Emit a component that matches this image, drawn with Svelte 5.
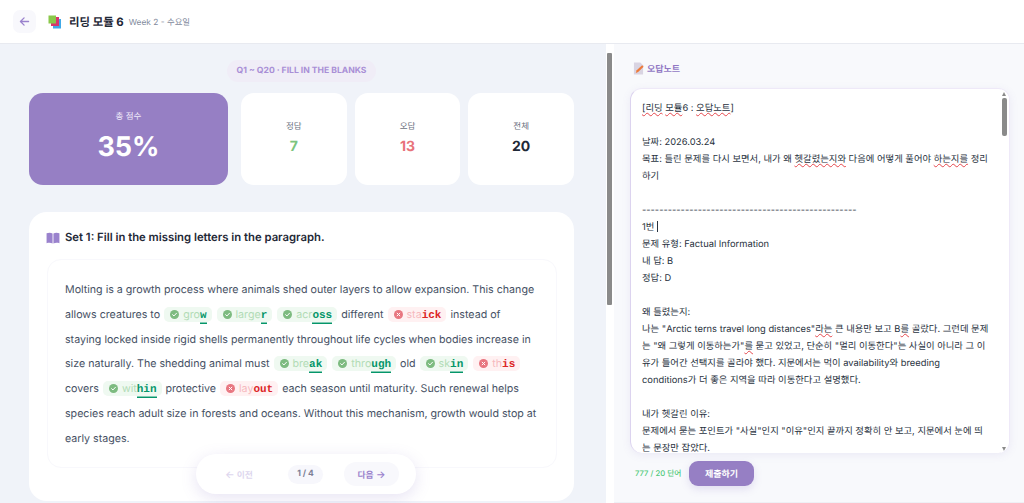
<script>
  const stats = [
    { label: '정답', value: '7', tone: 'good' },
    { label: '오답', value: '13', tone: 'bad' },
    { label: '전체', value: '20', tone: 'all' }
  ];

  // *word* marks what the browser's spell check underlined
  const note = [
    '*[리딩* *모듈*6 : *오답노트*]',
    '',
    '날짜: 2026.03.24',
    '목표: 틀린 문제를 다시 보면서, 내가 왜 *헷갈렸는지와* 다음에 어떻게 풀어야 *하는지를* 정리하기',
    '',
    '--------------------------------------------------',
    '1번|',
    '문제 유형: Factual Information',
    '내 답: B',
    '정답: D',
    '',
    '왜 틀렸는지:',
    '나는 "Arctic terns travel long distances"*라는* 큰 내용만 보고 B*를* 골랐다. 그런데 문제는 "왜 그렇게 이동하는가"*를* 묻고 있었고, 단순히 "멀리 이동한다"는 사실이 아니라 그 이유가 들어간 선택지를 골라야 했다. 지문에서는 먹이 availability와 breeding',
    'conditions가 더 좋은 지역을 따라 이동한다고 설명했다.',
    '',
    '내가 헷갈린 이유:',
    '문제에서 묻는 포인트가 "사실"인지 "이유"인지 끝까지 정확히 안 보고, 지문에서 눈에 띄는 문장만 잡았다.'
  ];
</script>

{#snippet chip(ok, typed, fixed)}
  <span class="chip" class:ok class:no={!ok}>
    <svg class="mark" viewBox="0 0 10 10" aria-hidden="true">
      <circle cx="5" cy="5" r="5" />
      {#if ok}
        <path d="M2.9 5.2 4.4 6.6 7.2 3.6" />
      {:else}
        <path d="M3.5 3.5 6.5 6.5M6.5 3.5 3.5 6.5" />
      {/if}
    </svg>
    <span class="typed">{typed}</span><b class="fixed">{fixed}</b>
  </span>
{/snippet}

<div class="app">
  <header class="top">
    <button class="back" aria-label="뒤로">
      <svg viewBox="0 0 16 16" width="13" height="13"><path d="M13 8H3M7.5 3.5 3 8l4.5 4.5" /></svg>
    </button>
    <svg class="books" viewBox="0 0 14 14" width="14" height="14" aria-hidden="true">
      <rect x="5" y="4" width="8" height="9.5" fill="#3fa9e8" />
      <rect x="3" y="2" width="8" height="9" fill="#d8356c" />
      <rect x="0.5" y="0.5" width="7.5" height="8" fill="#8ac84a" />
    </svg>
    <h1>리딩 모듈 6</h1>
    <span class="sub">Week 2 - 수요일</span>
  </header>

  <main class="split">
    <section class="left">
      <div class="pill-row"><span class="pill">Q1 ~ Q20 · FILL IN THE BLANKS</span></div>

      <div class="scores">
        <div class="total">
          <span class="total-label">총 점수</span>
          <strong>35%</strong>
        </div>
        {#each stats as s}
          <div class="stat">
            <span class="stat-label">{s.label}</span>
            <strong class={s.tone}>{s.value}</strong>
          </div>
        {/each}
      </div>

      <article class="card">
        <h2>
          <svg viewBox="0 0 16 14" width="14" height="12" aria-hidden="true">
            <path d="M0.5 1.5C3 0.5 5.6 0.6 7.5 1.8V13.4C5.6 12.3 3 12.2 0.5 13Z" />
            <path d="M15.5 1.5C13 0.5 10.4 0.6 8.5 1.8V13.4C10.4 12.3 13 12.2 15.5 13Z" />
          </svg>
          Set 1: Fill in the missing letters in the paragraph.
        </h2>
        <div class="passage">
          Molting is a growth process where animals shed outer layers to allow expansion. This change allows creatures to
          {@render chip(true, 'gro', 'w')}
          {@render chip(true, 'large', 'r')}
          {@render chip(true, 'acr', 'oss')}
          different
          {@render chip(false, 'sta', 'ick')}
          instead of staying locked inside rigid shells permanently throughout life cycles when bodies increase in size naturally. The shedding animal must
          {@render chip(true, 'bre', 'ak')}
          {@render chip(true, 'thro', 'ugh')}
          old
          {@render chip(true, 'sk', 'in')}
          {@render chip(false, 'th', 'is')}
          covers
          {@render chip(true, 'wit', 'hin')}
          protective
          {@render chip(false, 'lay', 'out')}
          each season until maturity. Such renewal helps species reach adult size in forests and oceans. Without this mechanism, growth would stop at early stages.
        </div>
      </article>

      <nav class="pager">
        <button class="prev"><span class="arrow">←</span> 이전</button>
        <span class="count">1 / 4</span>
        <button class="next">다음 <span class="arrow">→</span></button>
      </nav>
    </section>

    <div class="page-scroll"><i></i></div>

    <aside class="right">
      <h3>
        <svg viewBox="0 0 12 14" width="11" height="13" aria-hidden="true">
          <path d="M1 0.5H8L11 3.5V13.5H1Z" fill="#d9d4e2" />
          <path d="M3 12 4 9 10 3.5 11.6 5 5.6 10.8Z" fill="#ee7a3a" />
        </svg>
        오답노트
      </h3>
      <div class="note">
        <div class="note-text">
          {#each note as line}
            <div class="line">
              {#each line.replace('|', '').split('*') as part, i}
                {#if i % 2}<u>{part}</u>{:else}{part}{/if}
              {/each}
              {#if line.endsWith('|')}<span class="caret"></span>{/if}
            </div>
          {/each}
        </div>
        <div class="note-scroll"><em class="up"></em><i></i><em class="down"></em></div>
      </div>
      <div class="foot">
        <span class="words">777 / 20 단어</span>
        <button class="submit">제출하기</button>
      </div>
    </aside>
  </main>
</div>

<style>
  :global(body) { margin: 0; }
  .app {
    height: 503px;
    overflow: hidden;
    display: flex;
    flex-direction: column;
    font-family: Inter, "Noto Sans CJK KR", sans-serif;
    color: #1f2937;
    text-rendering: geometricPrecision;
  }
  button { font-family: inherit; border: 0; text-rendering: geometricPrecision; }

  .top {
    height: 44px;
    flex: none;
    box-sizing: border-box;
    border-bottom: 1px solid #e8eaf0;
    background: #fff;
    display: flex;
    align-items: center;
    padding-left: 13px;
  }
  .back {
    width: 23px;
    height: 23px;
    padding: 0;
    border-radius: 7px;
    background: #f8f8fc;
    display: flex;
    align-items: center;
    justify-content: center;
  }
  .back path { fill: none; stroke: #9a82cd; stroke-width: 1.6; stroke-linecap: round; stroke-linejoin: round; }
  .books { margin-left: 12px; }
  h1 { margin: 0 0 0 7px; font-size: 11.4px; font-weight: 700; color: #1f2937; }
  .sub { margin-left: 5px; font-size: 8.4px; color: #7f8a9c; }

  .split { flex: 1; display: flex; min-height: 0; }

  .left {
    width: 606px;
    flex: none;
    position: relative;
    box-sizing: border-box;
    background: #f0f3f9;
    padding: 16px 32px 0 29px;
    overflow: hidden;
  }
  .pill-row { display: flex; justify-content: center; }
  .pill {
    height: 22px;
    line-height: 22px;
    padding: 0 10px;
    border-radius: 11px;
    background: #f0edf7;
    color: #a98fd6;
    font-size: 8.6px;
    font-weight: 700;
  }
  .scores {
    display: flex;
    gap: 8px;
    margin-top: 11px;
    height: 92px;
  }
  .total {
    margin-right: 5px;
    width: 199px;
    flex: none;
    border-radius: 14px;
    background: #967fc4;
    color: #fff;
    display: flex;
    flex-direction: column;
    align-items: center;
    padding-top: 18px;
    box-sizing: border-box;
  }
  .total-label { font-size: 8.5px; color: #f0ebfa; line-height: 12px; }
  .total strong { font-size: 27px; font-weight: 700; line-height: 33px; margin-top: 7px; }
  .stat {
    flex: 1;
    background: #fff;
    border-radius: 13px;
    display: flex;
    flex-direction: column;
    align-items: center;
    padding-top: 28px;
    box-sizing: border-box;
  }
  .stat-label { font-size: 8.5px; color: #6b7280; line-height: 12px; }
  .stat strong { font-size: 14px; font-weight: 700; line-height: 18px; margin-top: 5px; }
  .good { color: #7cc47f; }
  .bad { color: #e8727a; }
  .all { color: #1f2937; }

  .card {
    margin-top: 27px;
    width: 545px;
    height: 289px;
    box-sizing: border-box;
    background: #fff;
    border-radius: 18px;
    padding: 17px 17px 0 17px;
  }
  h2 {
    margin: 0;
    font-size: 11.3px;
    font-weight: 600;
    line-height: 17px;
    color: #1f2937;
    display: flex;
    align-items: center;
    gap: 5px;
  }
  h2 svg { fill: #9a82cd; }
  .passage {
    margin: 13px 0 0 1px;
    height: 209px;
    box-sizing: border-box;
    border: 1px solid #f8f8fc;
    border-radius: 14px;
    padding: 18px 17px 0;
    font-size: 10.67px;
    line-height: 24.75px;
    color: #465164;
  }
  .chip {
    display: inline-flex;
    align-items: baseline;
    height: 15px;
    line-height: 15px;
    padding: 0 5px 0 6px;
    margin: 0 1px;
    border-radius: 5px;
  }
  .chip.ok { background: #eff9f1; }
  .chip.no { background: #fff1f2; }
  .mark { width: 9px; height: 9px; margin-right: 4px; flex: none; align-self: center; }
  .mark path { fill: none; stroke: #fff; stroke-width: 1.1; stroke-linecap: round; stroke-linejoin: round; }
  .ok .mark circle { fill: #7dbb80; }
  .no .mark circle { fill: #e87680; }
  .ok .typed { color: #b2dcb6; }
  .no .typed { color: #f6b9be; }
  .fixed {
    font-family: "Liberation Mono", monospace;
    font-size: 11px;
    font-weight: 700;
  }
  .ok .fixed { color: #059669; box-shadow: inset 0 -1.5px #059669; }
  .no .fixed { color: #dc2626; }

  .pager {
    position: absolute;
    left: 196px;
    top: 410px;
    width: 220px;
    height: 40px;
    box-sizing: border-box;
    background: #fff;
    border-radius: 20px;
    box-shadow: 0 4px 16px rgba(120, 100, 190, 0.18);
    display: flex;
    align-items: center;
    padding-left: 29px;
  }
  .pager button { font-size: 8.8px; font-weight: 600; height: 24px; background: transparent; padding: 0; }
  .arrow { font-size: 10px; }
  .pager .prev { color: #ddd6ee; width: 63px; text-align: left; }
  .count {
    width: 35px;
    text-align: center;
    font-size: 8.5px;
    font-weight: 700;
    color: #7d7f96;
    background: #f7f7fc;
    border-radius: 10px;
    height: 19px;
    line-height: 19px;
  }
  .pager .next { color: #9a82cd; background: #f8f8fc; border-radius: 12px; width: 55px; margin-left: 21px; }

  .page-scroll {
    width: 8px;
    flex: none;
    background: #fff;
    position: relative;
  }
  .page-scroll i {
    position: absolute;
    left: 1px;
    top: 9px;
    width: 5px;
    height: 252px;
    background: #8a8a8a;
    border-radius: 1px;
  }

  .right {
    flex: 1;
    min-width: 0;
    box-sizing: border-box;
    background: #f8f9fc;
    padding: 16px 14px 0 16px;
    border-bottom: 1px solid #eef0f5;
  }
  h3 {
    margin: 0;
    height: 16px;
    display: flex;
    align-items: center;
    gap: 3px;
    padding-left: 3px;
    font-size: 9px;
    font-weight: 600;
    color: #9278c4;
  }
  .note {
    position: relative;
    margin-top: 12px;
    height: 365px;
    box-sizing: border-box;
    background: #fff;
    border-left: 1px solid #dcd3ef;
    border-right: 1px solid #eee9f8;
    border-top: 1px solid #eee9f8;
    border-radius: 12px;
    box-shadow: 0 2px 8px rgba(120, 100, 190, 0.1);
    overflow: hidden;
    padding: 11px 13px 0 11px;
  }
  .note-text {
    font-size: 9.33px;
    line-height: 17px;
    color: #283240;
    width: 349px;
  }
  .line { min-height: 17px; white-space: pre-wrap; }
  .note-text u {
    text-decoration: underline wavy #e5484d 1px;
    text-underline-offset: 1px;
  }
  .caret { display: inline-block; width: 1px; height: 11px; background: #283240; vertical-align: -2px; }
  .note-scroll {
    position: absolute;
    right: 0;
    top: 0;
    bottom: 0;
    width: 8px;
    background: #fff;
  }
  .note-scroll i {
    position: absolute;
    left: 1px;
    top: 9px;
    width: 5px;
    height: 38px;
    background: #8a8a8a;
    border-radius: 2px;
  }
  .note-scroll em {
    position: absolute;
    left: 1px;
    width: 0;
    height: 0;
    border-left: 2.5px solid transparent;
    border-right: 2.5px solid transparent;
  }
  .up { top: 3px; border-bottom: 4px solid #8a8a8a; }
  .down { bottom: 2px; border-top: 4px solid #8a8a8a; }

  .foot { display: flex; align-items: center; margin-top: 8px; padding-left: 5px; }
  .words { width: 54px; flex: none; font-size: 7.7px; font-weight: 500; color: #4fc97a; white-space: nowrap; }
  .submit {
    width: 65px;
    height: 25px;
    border-radius: 9px;
    background: #967fc4;
    color: #fff;
    font-size: 9px;
    font-weight: 600;
    box-shadow: 0 3px 8px rgba(120, 100, 190, 0.18);
  }
</style>
